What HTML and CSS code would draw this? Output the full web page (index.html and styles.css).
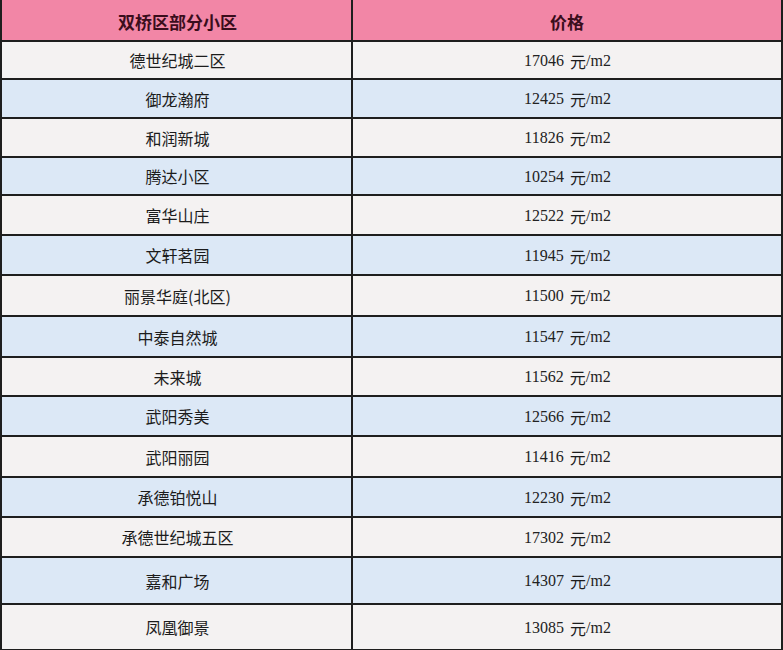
FILE: index.html
```html
<!DOCTYPE html>
<html lang="zh-CN">
<head>
<meta charset="utf-8">
<title>双桥区部分小区价格</title>
<link rel="stylesheet" href="styles.css">
</head>
<body>
<div class="table">
  <div class="row head"><div class="cell">双桥区部分小区</div><div class="cell">价格</div></div>
  <div class="row"><div class="cell name">德世纪城二区</div><div class="cell price"><span class="num">17046</span><span class="unit">元</span><span class="num">/m2</span></div></div>
  <div class="row"><div class="cell name">御龙瀚府</div><div class="cell price"><span class="num">12425</span><span class="unit">元</span><span class="num">/m2</span></div></div>
  <div class="row"><div class="cell name">和润新城</div><div class="cell price"><span class="num">11826</span><span class="unit">元</span><span class="num">/m2</span></div></div>
  <div class="row"><div class="cell name">腾达小区</div><div class="cell price"><span class="num">10254</span><span class="unit">元</span><span class="num">/m2</span></div></div>
  <div class="row"><div class="cell name">富华山庄</div><div class="cell price"><span class="num">12522</span><span class="unit">元</span><span class="num">/m2</span></div></div>
  <div class="row"><div class="cell name">文轩茗园</div><div class="cell price"><span class="num">11945</span><span class="unit">元</span><span class="num">/m2</span></div></div>
  <div class="row"><div class="cell name">丽景华庭(北区)</div><div class="cell price"><span class="num">11500</span><span class="unit">元</span><span class="num">/m2</span></div></div>
  <div class="row"><div class="cell name">中泰自然城</div><div class="cell price"><span class="num">11547</span><span class="unit">元</span><span class="num">/m2</span></div></div>
  <div class="row"><div class="cell name">未来城</div><div class="cell price"><span class="num">11562</span><span class="unit">元</span><span class="num">/m2</span></div></div>
  <div class="row"><div class="cell name">武阳秀美</div><div class="cell price"><span class="num">12566</span><span class="unit">元</span><span class="num">/m2</span></div></div>
  <div class="row"><div class="cell name">武阳丽园</div><div class="cell price"><span class="num">11416</span><span class="unit">元</span><span class="num">/m2</span></div></div>
  <div class="row"><div class="cell name">承德铂悦山</div><div class="cell price"><span class="num">12230</span><span class="unit">元</span><span class="num">/m2</span></div></div>
  <div class="row"><div class="cell name">承德世纪城五区</div><div class="cell price"><span class="num">17302</span><span class="unit">元</span><span class="num">/m2</span></div></div>
  <div class="row"><div class="cell name">嘉和广场</div><div class="cell price"><span class="num">14307</span><span class="unit">元</span><span class="num">/m2</span></div></div>
  <div class="row"><div class="cell name">凤凰御景</div><div class="cell price"><span class="num">13085</span><span class="unit">元</span><span class="num">/m2</span></div></div>
</div>
</body>
</html>
```

FILE: styles.css
```css
html, body {
  margin: 0;
  padding: 0;
  background: #f4f2f2;
}
.table {
  width: 783px;
  display: flex;
  flex-direction: column;
  font-family: "Noto Sans CJK SC", sans-serif;
  color: #1c1c1c;
}
.row {
  display: grid;
  grid-template-columns: 353px 430px;
  height: 40px;
  background: #f4f2f2;
}
.row:nth-child(odd) { background: #dce8f6; }
.row.head { background: #f286a6; height: 42px; }
.row:nth-child(2) { height: 38px; }
.row:nth-child(3) { height: 39px; }
.row:nth-child(4) { height: 39px; }
.row:nth-child(5) { height: 38px; }
.row:nth-child(8) { height: 41px; }
.row:nth-child(9) { height: 41px; }
.row:nth-child(10) { height: 39px; }
.row:nth-child(12) { height: 41px; }
.row:nth-child(15) { height: 47px; }
.row:nth-child(16) { height: 46px; }
.cell {
  box-sizing: border-box;
  display: flex;
  align-items: center;
  justify-content: center;
  border-bottom: 2px solid #1e1e1e;
  border-right: 2px solid #1e1e1e;
  font-size: 16px;
  white-space: nowrap;
}
.cell:first-child {
  border-left: 2px solid #1e1e1e;
  padding-left: 2px;
}
.head .cell {
  font-size: 17px;
  font-weight: 700;
  color: #3a0d1c;
  padding-top: 2px;
}
.price .num {
  font-family: "Liberation Serif", serif;
  font-size: 16px;
  color: #222;
}
.price .unit {
  font-size: 16px;
  margin-left: 6px;
}
.price {
  padding-left: 1px;
  padding-top: 1px;
}
```
